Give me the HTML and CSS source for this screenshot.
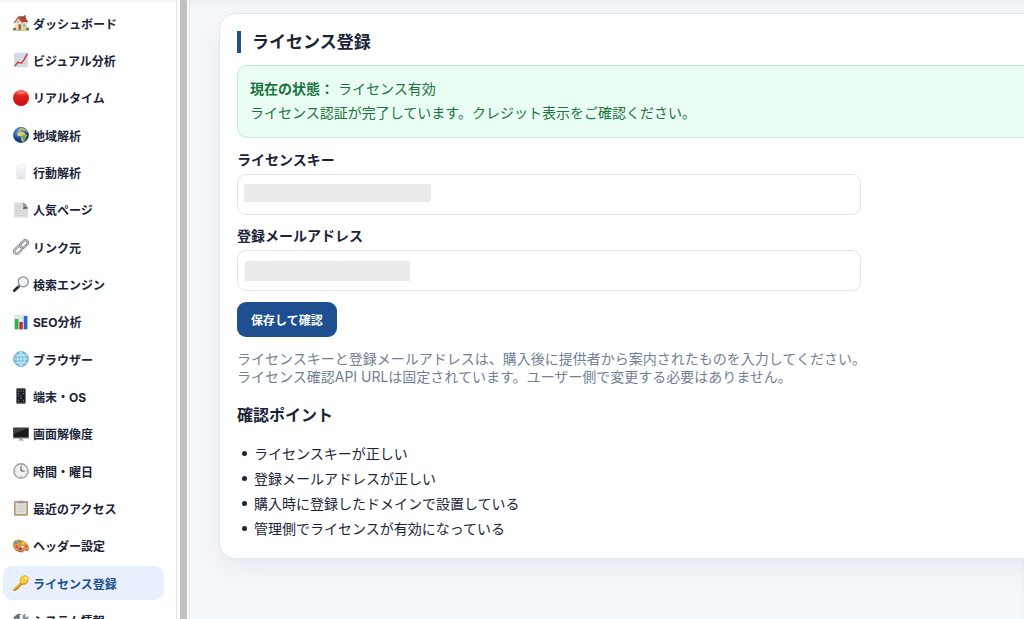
FILE: index.html
```html
<!DOCTYPE html>
<html lang="ja">
<head>
    <meta charset="UTF-8">
    <meta name="viewport" content="width=device-width, initial-scale=1.0">
    <title>ライセンス登録</title>
    <link rel="stylesheet" href="styles.css">
</head>
<body>
    <div class="layout">
        <nav class="sidebar">
            <a href="#dashboard" class="menu-item">
                <svg class="icon" viewBox="0 0 16 16"><path d="M0 13.8q3-1 8-.4t8-.2v2.300H0z" fill="#6f9a3c"/><path d="M2 7.500 5 3.200l4 4.300h5v7.300H2z" fill="#f0e2c4"/><path d="M8 8h6v6.800H8z" fill="#e2cda4"/><rect x="10.800" y=".3" width="2" height="4" fill="#9a6250"/><path d="M5.300 1.200h6.400l3.800 6H8.600z" fill="#a4463a"/><path d="M5.300 1.200.6 7.600l.9.8L5.200 3.700l3.600 4.400 1-.9z" fill="#c55d49"/><rect x="5.500" y="9.300" width="2.400" height="5.500" fill="#a0603b"/><rect x="9.600" y="9" width="3.200" height="3" fill="#fff"/><rect x="10" y="9.400" width="2.400" height="2.200" fill="#5b9ac2"/><circle cx="5" cy="6.800" r=".9" fill="#70a9c7"/><circle cx="1.700" cy="13.800" r="1.400" fill="#57852f"/><circle cx="14.400" cy="13.800" r="1.400" fill="#57852f"/></svg>
                ダッシュボード
            </a>
            <a href="#visual" class="menu-item">
                <svg class="icon" viewBox="0 0 16 16"><rect x="1" y=".7" width="14" height="14.6" fill="#d6e0e9"/><path d="M1 4.3h14M1 8h14M1 11.7h14M4.5.7v14.6M8 .7v14.6M11.5.7v14.6" stroke="#bccad6" stroke-width=".4"/><path d="m1.8 14 3-3.7 3.8.8L11 7.6l3.5-6" fill="none" stroke="#dc3434" stroke-width="1.4" stroke-linejoin="round"/></svg>
                ビジュアル分析
            </a>
            <a href="#realtime" class="menu-item">
                <svg class="icon" viewBox="0 0 16 16"><defs><linearGradient id="red" x2="0" y2="1"><stop stop-color="#f05b4d"/><stop offset=".4" stop-color="#e01f1c"/><stop offset="1" stop-color="#c80e12"/></linearGradient></defs><circle cx="8" cy="8" r="8" fill="url(#red)"/><ellipse cx="8" cy="2.6" rx="4.2" ry="1.7" fill="#fff" opacity=".25"/></svg>
                リアルタイム
            </a>
            <a href="#region" class="menu-item">
                <svg class="icon" viewBox="0 0 16 16"><defs><radialGradient id="sea" cx=".4" cy=".3"><stop stop-color="#6ba3e6"/><stop offset=".7" stop-color="#2b60ba"/><stop offset="1" stop-color="#163a80"/></radialGradient></defs><circle cx="8" cy="8" r="7.9" fill="url(#sea)"/><path d="M6 1.2 9.5.8l4 2 1.3 3-1.5-.5-1-1.5-2.2.2L9 3 7.5 4.2 5.6 3.7z" fill="#a5bd66"/><path d="m4.2 6 2.2-1.6 3.2.4 2 1.1 1.4 2.1 1.3.2-1.7 2.2-.4 2.1-1.9 2.3-1.4-.2-.8-2.6.2-1.9-1-1.1-2.2.1-1.1-1.3z" fill="#d9cf72"/><path d="m8 9 3-1 2 .2-.4 2-.4 2.1-1.9 2.3-.8-2z" fill="#7fa84b"/></svg>
                地域解析
            </a>
            <a href="#behavior" class="menu-item">
                <svg class="icon" viewBox="0 0 16 16"><defs><linearGradient id="mouse" x2="0" y2="1"><stop stop-color="#f8f8f9"/><stop offset="1" stop-color="#dfe3e6"/></linearGradient></defs><rect x="3.3" y=".6" width="9.4" height="15" rx="3.2" fill="url(#mouse)" stroke="#eceef0" stroke-width=".6"/><rect x="7.3" y="2.5" width="1.4" height="2.4" rx=".7" fill="#fff"/></svg>
                行動解析
            </a>
            <a href="#pages" class="menu-item">
                <svg class="icon" viewBox="0 0 16 16"><path d="M1 .5h8.5L15 6.5v9H1z" fill="#dedede"/><path d="M2.5 3.5h6M2.5 6h6M2.5 8.5h11M2.5 11h11M2.5 13.5h9" stroke="#cbcbcb" stroke-width=".6"/><path d="M9.5.5Q11.5 3 10 7l5-.5Q13 2.500 9.500.5z" fill="#585858"/><path d="M9.500.5q4 .5 5.500 6-2-2-4.400-1.500.2-2.500-1.100-4.500z" fill="#989898"/></svg>
                人気ページ
            </a>
            <a href="#referrer" class="menu-item">
                <svg class="icon" viewBox="0 0 16 16"><g fill="none"><rect x="-4.3" y="-2.5" width="8.6" height="5" rx="2.5" transform="translate(11 5) rotate(-45)" stroke="#6d737b" stroke-width="2.3"/><rect x="-4.3" y="-2.5" width="8.6" height="5" rx="2.5" transform="translate(11 5) rotate(-45)" stroke="#c5c9cd" stroke-width="1"/><rect x="-4.3" y="-2.5" width="8.6" height="5" rx="2.5" transform="translate(5 11) rotate(-45)" stroke="#737981" stroke-width="2.3"/><rect x="-4.3" y="-2.5" width="8.6" height="5" rx="2.5" transform="translate(5 11) rotate(-45)" stroke="#d5d8da" stroke-width="1"/></g></svg>
                リンク元
            </a>
            <a href="#search" class="menu-item">
                <svg class="icon" viewBox="0 0 16 16"><path d="m1.4 14.6 4.3-4.2" stroke="#282a2e" stroke-width="2.8" stroke-linecap="round"/><path d="m5.2 10.8 1.6-1.6" stroke="#8b9096" stroke-width="1.5"/><circle cx="10.2" cy="5.8" r="5" fill="#edf2f5" stroke="#858b93" stroke-width="1.2"/><path d="M7 5a3.5 3.5 0 0 1 3.6-2.7" fill="none" stroke="#fff" stroke-width="1"/></svg>
                検索エンジン
            </a>
            <a href="#seo" class="menu-item">
                <svg class="icon" viewBox="0 0 16 16"><rect x="1" y=".5" width="14" height="15" fill="#e3ebf2"/><path d="M1 4h14M1 8h14M1 12h14M5.5.5v15M10.5.5v15" stroke="#c6d2dc" stroke-width=".4"/><rect x="1.8" y="5" width="3.5" height="10.3" fill="#28b63d"/><rect x="6.3" y="8" width="3.5" height="7.3" fill="#cc252b"/><rect x="10.8" y="2" width="3.5" height="13.3" fill="#2466cb"/></svg>
                SEO分析
            </a>
            <a href="#browser" class="menu-item">
                <svg class="icon" viewBox="0 0 16 16"><circle cx="8" cy="8" r="7.4" fill="#78bfdc" stroke="#55a5c7" stroke-width=".8"/><path d="M8 .8v14.4M.8 8h14.4M2.1 4.3h11.8M2.1 11.7h11.8M8 .8Q.8 8 8 15.2M8 .8q7.2 7.2 0 14.4" fill="none" stroke="#e1f4fa" stroke-width=".8"/></svg>
                ブラウザー
            </a>
            <a href="#device" class="menu-item">
                <svg class="icon" viewBox="0 0 16 16"><rect x="3.3" y=".2" width="9.4" height="15.6" rx="1.2" fill="#423f3d"/><rect x="4.3" y="1.6" width="7.4" height="12.3" fill="#181a22"/><g fill="#459557"><path d="M5 2.5h1.3v1.3H5zM9.7 5H11v1.3H9.7zM7.3 9.5h1.3v1.3H7.3z"/></g><g fill="#b84f50"><path d="M7.3 2.5h1.3v1.3H7.3zM5 7.3h1.3v1.3H5zM9.7 11.7H11V13H9.7z"/></g><g fill="#467ab6"><path d="M9.7 2.5H11v1.3H9.7zM5 5h1.3v1.3H5zM7.3 7.3h1.3v1.3H7.3zM5 11.7h1.3V13H5z"/></g></svg>
                端末・OS
            </a>
            <a href="#resolution" class="menu-item">
                <svg class="icon" viewBox="0 0 16 16"><path d="M6.2 12h3.6l.5 3H5.7z" fill="#b4b4b4"/><rect x="5" y="14" width="6" height="1.2" rx=".6" fill="#d0d0d0"/><rect x="0" y="1.3" width="16" height="11.2" rx=".6" fill="#8b8b8b"/><rect x=".6" y="1.9" width="14.8" height="9.5" fill="#191919"/><path d="M.6 1.9h14.8L.6 8z" fill="#3f3f3f"/></svg>
                画面解像度
            </a>
            <a href="#time" class="menu-item">
                <svg class="icon" viewBox="0 0 16 16"><circle cx="8" cy="8" r="7.1" fill="#f1f1f1" stroke="#a5a8ae" stroke-width="1.6"/><path d="M8 2.3v1M8 12.7v1M2.3 8h1M12.7 8h1" stroke="#888" stroke-width=".7"/><path d="M8 3.5V8h3.6" fill="none" stroke="#3d3d40" stroke-width=".9"/></svg>
                時間・曜日
            </a>
            <a href="#recent" class="menu-item">
                <svg class="icon" viewBox="0 0 16 16"><rect x="1" y="1" width="14" height="14.7" rx="1" fill="#b8966e"/><rect x="2.6" y="2.7" width="10.8" height="11.4" fill="#dddeda"/><path d="M4 5.5h8M4 7.5h8M4 9.5h8M4 11.5h8" stroke="#c9cbc9" stroke-width=".6"/><path d="M4.5 3.2V1.8h2Q6.5.3 8 .3t1.5 1.500h2v1.400z" fill="#969c9e"/></svg>
                最近のアクセス
            </a>
            <a href="#header" class="menu-item">
                <svg class="icon" viewBox="0 0 16 16"><path d="M.2 6Q.5 2 5 1.7q5-.2 8.600 3.900Q16.600 9 15.700 11.700q-.7 2.100-2.700 1.100-1.700-1-2.400.3-.5 1.700-3 1.200Q3 13.500 1 10 0 8 .2 6z" fill="#a86328"/><path d="M.3 5.400Q1 2 5 1.700q5-.2 8.600 3.900Q16.300 8.500 15.800 10.800q-.7 1.900-2.700 1-2.200-1-2.700.3-.5 1.500-2.800 1Q3 12.500 1.100 9 .1 7.200.3 5.400z" fill="#de9848"/><circle cx="3" cy="5" r="1.400" fill="#3a9cde"/><circle cx="6.500" cy="3.700" r="1.300" fill="#4eb343"/><circle cx="10.200" cy="5.300" r="1.300" fill="#edd13a"/><circle cx="13" cy="8.500" r="1.300" fill="#e75232"/><circle cx="3.800" cy="8.700" r="1.300" fill="#e3453b"/><circle cx="7.300" cy="10.800" r="1.400" fill="#7535a3"/><ellipse cx="9.600" cy="8.700" rx="1.300" ry=".9" fill="#fff"/></svg>
                ヘッダー設定
            </a>
            <a href="#license" class="menu-item active">
                <svg class="icon" viewBox="0 0 16 16"><path d="m8.3 7.3 1.8 1.8-5 4.5-.6 1.3-1.3-.2-.6 1.100-2.200.1-.1-1.800z" fill="#b88213"/><path d="m7.500 6.700 1.700 1.400-8.500 7.200-.4-1.200z" fill="#ebc12d"/><path d="M7.300 2.800Q9 .2 12 .3q3.900.5 3.700 4.200-.1 3.200-2.600 4.700-2.700 1.500-5-.3-2.500-2.700-.8-6.100z" fill="#d9a41b"/><path d="M7.700 3Q9.500.6 12 .8q3 .5 3 3.300-.4 2.800-2.700 4-2.300 1-4.200-.4Q6.300 5.600 7.700 3z" fill="#f3cc3d"/><circle cx="12.800" cy="3.200" r="1.100" fill="#fff6d0"/></svg>
                ライセンス登録
            </a>
            <a href="#system" class="menu-item">
                <svg class="icon" viewBox="0 0 16 16"><path d="m3.5 14 8.3-9" stroke="#8b9299" stroke-width="2.2"/><path d="M9.5 4.2Q9.5 1 13 .7L12 3l1.5 1.2L15.600 3q.3 3.600-3 4-3 .1-3.100-2.800z" fill="#8b9299"/><path d="m4.800 5.500 8.800 9.200" stroke="#515b66" stroke-width="2.200"/><path d="M.3 4.500 4 1.200Q6.500.3 8.600 1.600L6.300 2.500l.8 1.700-2.300 2.300-1.500-1.300-1.300 1.200z" fill="#66717c"/></svg>
                システム情報
            </a>
        </nav>
        <div class="scrollbar"></div>

        <main class="content">
            <section class="card">
                <h1>ライセンス登録</h1>
                <div class="status">
                    <strong>現在の状態：</strong> ライセンス有効<br>
                    ライセンス認証が完了しています。クレジット表示をご確認ください。
                </div>
                <form class="license-form">
                    <label for="licenseKey">ライセンスキー</label>
                    <input type="text" id="licenseKey" class="masked-key">
                    <label for="email">登録メールアドレス</label>
                    <input type="email" id="email" class="masked-email">
                    <button type="submit">保存して確認</button>
                </form>
                <p class="help">
                    ライセンスキーと登録メールアドレスは、購入後に提供者から案内されたものを入力してください。<br>
                    ライセンス確認API URLは固定されています。ユーザー側で変更する必要はありません。
                </p>
                <h2>確認ポイント</h2>
                <ul class="checklist">
                    <li>ライセンスキーが正しい</li>
                    <li>登録メールアドレスが正しい</li>
                    <li>購入時に登録したドメインで設置している</li>
                    <li>管理側でライセンスが有効になっている</li>
                </ul>
            </section>
        </main>
    </div>
</body>
</html>
```

FILE: styles.css
```css
* {
    box-sizing: border-box;
}
body {
    margin: 0;
    background-color: #f4f7fc;
    color: #1a2438;
    font-family: Inter, "Noto Sans CJK JP", sans-serif;
    font-size: 14px;
}
.layout {
    display: flex;
    height: 100vh;
    overflow: hidden;
    box-shadow: inset 0 4px 4px rgba(15, 23, 42, 0.03);
}

/* Sidebar */
.sidebar {
    display: flex;
    flex-direction: column;
    justify-content: space-between;
    flex: 0 0 177px;
    height: 103vh;
    padding: 6px 12px 0 3px;
    background: linear-gradient(#f5f5f6, #fff 5px);
    border-right: 1px solid #e4e6e9;
}
.menu-item {
    display: flex;
    align-items: center;
    gap: 4px;
    height: 34px;
    padding: 0 10px;
    border-radius: 9px;
    color: #1a2438;
    font-size: 12px;
    font-weight: 700;
    text-decoration: none;
    white-space: nowrap;
}
.menu-item.active {
    background-color: #e8f0fe;
    color: #1d4f91;
}
.icon {
    flex: none;
    width: 16px;
    height: 16px;
}
.scrollbar {
    flex: 0 0 12px;
    background-color: #c1c1c1;
    border: solid #fafafa;
    border-width: 0 2px 0 3px;
    box-shadow: 1px 0 #e0e4ea;
}

/* Main card */
.content {
    flex: 1;
    min-width: 0;
    margin-left: 1px;
    padding: 13px 0 0 29px;
    overflow: hidden;
}
.card {
    margin-right: -40px;
    padding: 17px;
    background-color: #fff;
    border: 1px solid #e0e6ef;
    border-radius: 16px;
    box-shadow: 0 10px 30px rgba(15, 23, 42, 0.06);
}
h1 {
    margin: 0 0 12px;
    padding-left: 11px;
    border-left: 4px solid #1d4f91;
    font-size: 17px;
    line-height: 22px;
}
h2 {
    margin: 0 0 15px;
    font-size: 16px;
    line-height: 22px;
}
.status {
    padding: 11px 12px 12px;
    background-color: #eafdf3;
    border: 1px solid #c3ecd3;
    border-radius: 10px;
    color: #1a7340;
    line-height: 24px;
}
.license-form {
    display: flex;
    flex-direction: column;
    align-items: flex-start;
    margin: 12px 0 13px;
}
label {
    margin-bottom: 4px;
    font-weight: 700;
    line-height: 20px;
}
input {
    width: 100%;
    max-width: 624px;
    height: 41px;
    margin: 0 0 11px;
    padding: 0 12px;
    border: 1px solid #dfe5ee;
    border-radius: 9px;
    background: #fff linear-gradient(#ebebeb, #ebebeb) no-repeat;
    font: inherit;
}
.masked-key {
    background-position: 6px 9px;
    background-size: 187px 18px;
}
.masked-email {
    background-position: 7px 10px;
    background-size: 165px 20px;
}
button {
    height: 35px;
    padding: 0 14px;
    border: 0;
    border-radius: 9px;
    background-color: #1d4f91;
    color: #fff;
    font-family: inherit;
    font-size: 12px;
    font-weight: 700;
    cursor: pointer;
}
.help {
    margin: 0 0 18px;
    color: #718096;
    line-height: 18px;
}
.checklist {
    margin: 0;
    padding-left: 5px;
    line-height: 25px;
    list-style: none;
}
.checklist li {
    display: flex;
    align-items: center;
    gap: 7px;
}
.checklist li::before {
    content: '';
    width: 5px;
    height: 5px;
    border-radius: 50%;
    background-color: #1a2438;
}
```
